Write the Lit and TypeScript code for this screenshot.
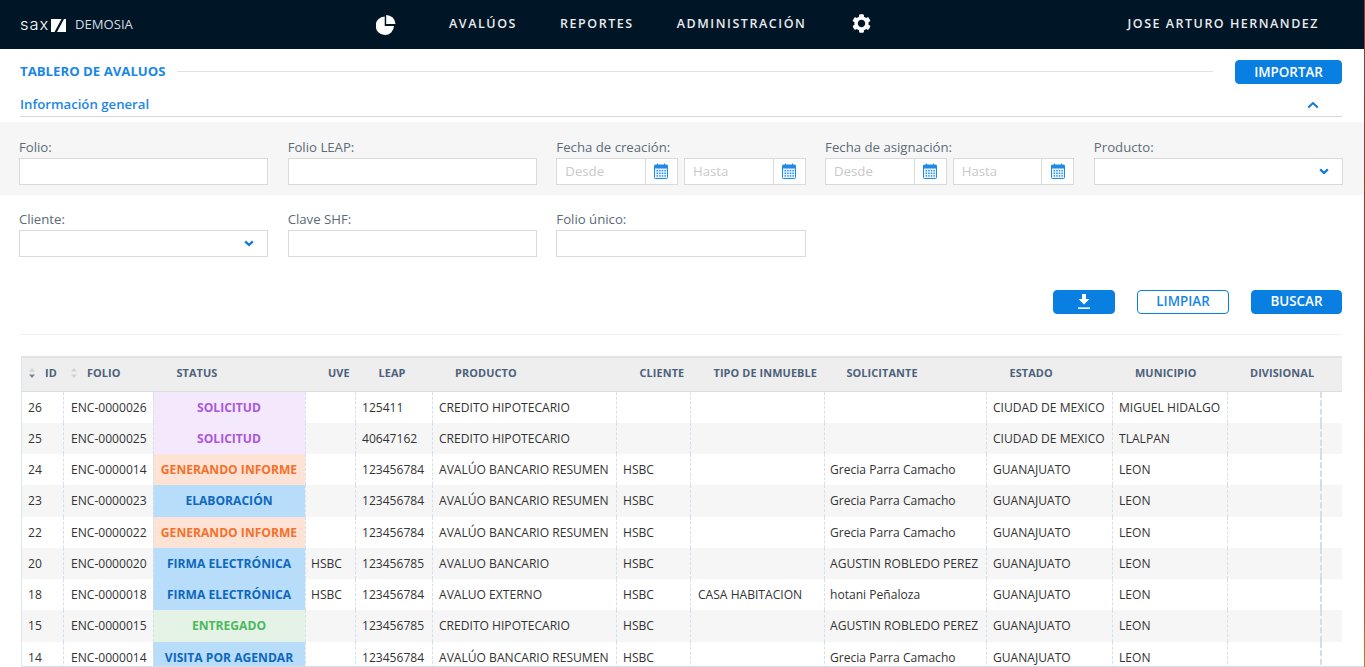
import { LitElement, html, css, svg } from "lit";
import { customElement } from "lit/decorators.js";

type Tone = "sol" | "gen" | "ela" | "ent";
interface Row { id: string; folio: string; status: string; tone: Tone; uve: string; leap: string; prod: string; cli: string; tipo: string; sol: string; edo: string; mun: string; }

const G = "Grecia Parra Camacho";
const A = "AGUSTIN ROBLEDO PEREZ";
const R = "AVALÚO BANCARIO RESUMEN";
const rows: Row[] = [
  { id: "26", folio: "ENC-0000026", status: "SOLICITUD", tone: "sol", uve: "", leap: "125411", prod: "CREDITO HIPOTECARIO", cli: "", tipo: "", sol: "", edo: "CIUDAD DE MEXICO", mun: "MIGUEL HIDALGO" },
  { id: "25", folio: "ENC-0000025", status: "SOLICITUD", tone: "sol", uve: "", leap: "40647162", prod: "CREDITO HIPOTECARIO", cli: "", tipo: "", sol: "", edo: "CIUDAD DE MEXICO", mun: "TLALPAN" },
  { id: "24", folio: "ENC-0000014", status: "GENERANDO INFORME", tone: "gen", uve: "", leap: "123456784", prod: R, cli: "HSBC", tipo: "", sol: G, edo: "GUANAJUATO", mun: "LEON" },
  { id: "23", folio: "ENC-0000023", status: "ELABORACIÓN", tone: "ela", uve: "", leap: "123456784", prod: R, cli: "HSBC", tipo: "", sol: G, edo: "GUANAJUATO", mun: "LEON" },
  { id: "22", folio: "ENC-0000022", status: "GENERANDO INFORME", tone: "gen", uve: "", leap: "123456784", prod: R, cli: "HSBC", tipo: "", sol: G, edo: "GUANAJUATO", mun: "LEON" },
  { id: "20", folio: "ENC-0000020", status: "FIRMA ELECTRÓNICA", tone: "ela", uve: "HSBC", leap: "123456785", prod: "AVALUO BANCARIO", cli: "HSBC", tipo: "", sol: A, edo: "GUANAJUATO", mun: "LEON" },
  { id: "18", folio: "ENC-0000018", status: "FIRMA ELECTRÓNICA", tone: "ela", uve: "HSBC", leap: "123456784", prod: "AVALUO EXTERNO", cli: "HSBC", tipo: "CASA HABITACION", sol: "hotani Peñaloza", edo: "GUANAJUATO", mun: "LEON" },
  { id: "15", folio: "ENC-0000015", status: "ENTREGADO", tone: "ent", uve: "", leap: "123456785", prod: "CREDITO HIPOTECARIO", cli: "HSBC", tipo: "", sol: A, edo: "GUANAJUATO", mun: "LEON" },
  { id: "14", folio: "ENC-0000014", status: "VISITA POR AGENDAR", tone: "ela", uve: "", leap: "123456784", prod: R, cli: "HSBC", tipo: "", sol: G, edo: "GUANAJUATO", mun: "LEON" },
];

const calendar = html`<svg class="cal" viewBox="0 0 14 16" width="14" height="16" aria-hidden="true">
  <path d="M3.5 0.5v3M10.5 0.5v3" stroke="#1e8ae6" stroke-width="1" fill="none"/>
  <rect x="0.5" y="2" width="13" height="13.5" rx="1" fill="#e8f3fd" stroke="#1e8ae6"/>
  <rect x="0.5" y="2" width="13" height="3.5" fill="#1e8ae6"/>
  ${[7, 9.6, 12.2].map((y) => [2.6, 5.2, 7.8, 10.4].map((x) => svg`<rect x="${x}" y="${y}" width="1.4" height="1.4" fill="#1e8ae6"/>`))}
</svg>`;

const chevronDown = html`<svg class="chev" viewBox="0 0 10 7" width="10" height="7" aria-hidden="true"><path d="M1.2 1.4 5 5 8.8 1.4" fill="none" stroke="#1278d8" stroke-width="2.3"/></svg>`;

const sortIcon = (active: boolean) => html`<svg class="sort" viewBox="0 0 8 12" width="8" height="12" aria-hidden="true">
  <path d="M4 1 7 4.6H1Z" fill="#d0d3d6"/><path d="M4 11 1 7.4H7Z" fill="${active ? "#77828d" : "#d0d3d6"}"/>
</svg>`;

@customElement("app-root")
export class AppRoot extends LitElement {
  static styles = css`
    :host { display: block; position: relative; width: 1365px; height: 667px; overflow: hidden; background: #fff; font-family: "Open Sans", "Liberation Sans", sans-serif; color: #333; }
    * { box-sizing: border-box; }
    .edge { position: absolute; top: 0; right: 0; bottom: 0; width: 1px; background: linear-gradient(#8e3c36, #b8431f 85%, #c77a2a); }
    .foot { position: absolute; left: 21px; right: 1px; bottom: 0; height: 1px; background: #d5e0ea; }

    header { height: 49px; background: #001526; color: #fff; display: flex; align-items: center; padding-left: 20px; }
    .brand { flex: 0 0 356px; display: flex; align-items: center; }
    .sax { font-size: 16.5px; line-height: 1; font-weight: 300; letter-spacing: 0.9px; width: 31px; font-family: "Inter", "Open Sans", sans-serif; margin-bottom: 1px; }
    .mark { display: block; margin-right: 10px; margin-bottom: -1px; }
    .demo { font-size: 13.1px; color: #d8dde2; margin-bottom: 2px; margin-left: -1px; }
    .pie { display: block; margin-right: 53px; margin-top: 1px; }
    .nav { font-size: 12.5px; font-weight: 600; letter-spacing: 1.55px; color: #e8ecef; margin-right: 43px; margin-bottom: 2px; white-space: nowrap; }
    .gear { display: block; margin-left: 3px; margin-bottom: 2px; }
    .user { margin-left: auto; margin-right: 46px; margin-bottom: 2px; font-size: 12.5px; font-weight: 600; letter-spacing: 1.5px; color: #e8ecef; }

    .title { height: 35px; margin: 11px 23px 0 20px; display: flex; align-items: flex-start; }
    .title h1 { margin: 0; font-size: 13.2px; line-height: 22px; font-weight: 700; color: #1a87e6; white-space: nowrap; }
    .title .rule { flex: 1; height: 1px; margin: 11px 22px 0 11px; background: #e2e2e2; }
    .btn { font-family: inherit; font-size: 13.4px; font-weight: 600; height: 24px; padding: 0 0 1px; border-radius: 4px; border: 1px solid #0a7fe2; background: #0a7fe2; color: #fff; display: inline-flex; align-items: center; justify-content: center; }
    .btn.imp { width: 107px; }
    .btn.out { background: #fff; color: #1a87e6; width: 92px; }
    .btn.dl { width: 62px; }
    .btn.go { width: 91px; }

    .section { margin: 0 23px 0 20px; height: 22px; border-bottom: 1px solid #d8d8d8; display: flex; justify-content: space-between; align-items: flex-start; font-size: 13.2px; font-weight: 600; color: #1a87e6; line-height: 18px; }
    .section svg { margin: 6px 23px 0 0; display: block; }

    .form { display: grid; grid-template-columns: repeat(5, 1fr); column-gap: 19.6px; padding: 0 22px 0 18.9px; }
    .f1 { margin-top: 5px; height: 73px; padding-top: 16px; background: #f6f6f6; }
    .f2 { padding-top: 15px; }
    .field { min-width: 0; }
    label { display: block; font-size: 13.2px; line-height: 18px; color: #5b6b79; margin-bottom: 2px; }
    .box { display: block; width: 100%; height: 26.5px; border: 1px solid #dadada; background: #fff; font-family: inherit; font-size: 13px; padding: 0 8px; margin: 0; outline: none; color: #333; }
    .sel { display: flex; align-items: center; justify-content: flex-end; padding-right: 13px; }
    .dates { display: grid; grid-template-columns: 1fr 1fr; column-gap: 6px; }
    .date { display: flex; height: 26.5px; border: 1px solid #dadada; background: #fff; min-width: 0; }
    .date input { flex: 1; min-width: 0; width: 0; border: 0; outline: 0; padding: 0 8px; font-family: inherit; font-size: 13.2px; background: transparent; }
    .date input::placeholder { color: #c9c9c9; opacity: 1; }
    .addon { flex: 0 0 32px; border-left: 1px solid #dadada; display: flex; align-items: center; justify-content: center; }
    .cal { display: block; }

    .actions { margin: 33px 23px 0 20px; display: flex; justify-content: flex-end; gap: 22px; height: 24px; }
    .sep { margin: 20px 23px 0 20px; height: 1px; background: #efefef; }

    .table { margin: 21px 23px 0 21px; border-left: 1px solid #dde5ec; }
    .tr { display: grid; grid-template-columns: 41px 90px 152px 50px 77px 184px 74px 134px 162px 126px 115px 93px 1fr; }
    .thead { height: 36px; background: #eeeeee; border-top: 2px solid #e3e3e3; border-bottom: 1px solid #dedede; font-size: 10.9px; font-weight: 700; color: #4c617a; }
    .th { display: flex; align-items: center; padding: 0 0 3px 23.5px; white-space: nowrap; letter-spacing: 0.1px; }
    .th.s { padding-left: 6px; }
    .th.f { padding-left: 7px; }
    .th.a { padding-left: 23px; }
    .th.b { padding-left: 22.5px; }
    .sort { display: block; margin-right: 9px; flex: none; }
    .row { height: 31.25px; font-size: 12.08px; color: #333; }
    .row:nth-child(even) { background: #f6f6f6; }
    .td { display: flex; align-items: center; padding: 0 0 0.2px 6px; white-space: nowrap; overflow: hidden; border-left: 1px dashed #d6e0e9; }
    .td.first { border-left: 0; }
    .td.p7 { padding-left: 7px; }
    .td.p5 { padding-left: 5px; }
    .td.last { border-left: 2px dashed #d3dee8; }
    .td.st { justify-content: center; padding: 0 1px 0.2px 0; font-weight: 700; font-size: 12.1px; }
    .sol { background: #f4e8fc; color: #aa56e0; }
    .gen { background: #fde3d6; color: #f5702a; }
    .ela { background: #b8ddfb; color: #0d68bd; }
    .ent { background: #e4f3e6; color: #4cb860; }
  `;

  private date() {
    return html`<div class="dates">
      <div class="date"><input placeholder="Desde" aria-label="Desde" /><span class="addon">${calendar}</span></div>
      <div class="date"><input placeholder="Hasta" aria-label="Hasta" /><span class="addon">${calendar}</span></div>
    </div>`;
  }

  render() {
    const heads: [string, string][] = [["STATUS", ""], ["UVE", "a"], ["LEAP", ""], ["PRODUCTO", "a"], ["CLIENTE", ""], ["TIPO DE INMUEBLE", ""], ["SOLICITANTE", "b"], ["ESTADO", ""], ["MUNICIPIO", "a"], ["DIVISIONAL", "a"]];
    return html`
      <header>
        <div class="brand">
          <span class="sax">sax</span>
          <svg class="mark" viewBox="0 0 15 13" width="15" height="13" aria-hidden="true">
            <path d="M0 0H10.5L3.5 13H0Z M13 0H15V13H6Z" fill="#fff"/>
          </svg>
          <span class="demo">DEMOSIA</span>
        </div>
        <svg class="pie" viewBox="0 0 20 20" width="20" height="20" aria-hidden="true">
          <path d="M8.7 1.6A9.2 9.2 0 1 0 18 11H8.7Z" fill="#fff"/>
          <path d="M10.2 0A9.3 9.3 0 0 1 19.5 8.9H10.2Z" fill="#fff"/>
        </svg>
        <span class="nav">AVALÚOS</span>
        <span class="nav">REPORTES</span>
        <span class="nav">ADMINISTRACIÓN</span>
        <svg class="gear" viewBox="0 0 512 512" width="19" height="19" aria-hidden="true"><path fill="#fff" d="M487.4 315.7l-42.6-24.6c4.3-23.2 4.3-47 0-70.2l42.6-24.6c4.9-2.8 7.1-8.6 5.5-14-11.1-35.6-30-67.8-54.7-94.6-3.8-4.1-10-5.1-14.8-2.3L380.8 110c-17.9-15.4-38.5-27.3-60.8-35.1V25.8c0-5.6-3.9-10.5-9.4-11.7-36.7-8.2-74.3-7.8-109.2 0-5.5 1.2-9.4 6.1-9.4 11.7V75c-22.2 7.9-42.8 19.8-60.8 35.1L88.7 85.5c-4.9-2.8-11-1.9-14.8 2.3-24.7 26.7-43.6 58.9-54.7 94.6-1.7 5.4 .6 11.2 5.5 14L67.3 221c-4.3 23.2-4.3 47 0 70.2l-42.6 24.6c-4.9 2.8-7.1 8.6-5.5 14 11.1 35.6 30 67.8 54.7 94.6 3.8 4.1 10 5.1 14.8 2.3l42.6-24.6c17.9 15.4 38.5 27.3 60.8 35.1v49.2c0 5.6 3.9 10.5 9.4 11.7 36.7 8.2 74.3 7.8 109.2 0 5.5-1.2 9.4-6.1 9.4-11.7v-49.2c22.2-7.9 42.8-19.8 60.8-35.1l42.6 24.6c4.9 2.8 11 1.9 14.8-2.3 24.7-26.7 43.6-58.9 54.7-94.6 1.5-5.5-.7-11.3-5.6-14.1zM256 356c-55 0-100-45-100-100s45-100 100-100 100 45 100 100-45 100-100 100z"/></svg>
        <span class="user">JOSE ARTURO HERNANDEZ</span>
      </header>

      <div class="title">
        <h1>TABLERO DE AVALUOS</h1>
        <div class="rule"></div>
        <button class="btn imp">IMPORTAR</button>
      </div>
      <div class="section">
        <span>Información general</span>
        <svg viewBox="0 0 12 8" width="12" height="8" aria-hidden="true"><path d="M1.2 6.4 6 2 10.8 6.4" fill="none" stroke="#1278d8" stroke-width="2"/></svg>
      </div>

      <div class="form f1">
        <div class="field"><label>Folio:</label><input class="box" aria-label="Folio" /></div>
        <div class="field"><label>Folio LEAP:</label><input class="box" aria-label="Folio LEAP" /></div>
        <div class="field"><label>Fecha de creación:</label>${this.date()}</div>
        <div class="field"><label>Fecha de asignación:</label>${this.date()}</div>
        <div class="field"><label>Producto:</label><div class="box sel">${chevronDown}</div></div>
      </div>
      <div class="form f2">
        <div class="field"><label>Cliente:</label><div class="box sel">${chevronDown}</div></div>
        <div class="field"><label>Clave SHF:</label><input class="box" aria-label="Clave SHF" /></div>
        <div class="field"><label>Folio único:</label><input class="box" aria-label="Folio único" /></div>
      </div>

      <div class="actions">
        <button class="btn dl" aria-label="Descargar">
          <svg viewBox="0 0 12 15" width="12" height="15" aria-hidden="true"><path d="M4 0H8V5H11.5L6 10.5 .5 5H4Z" fill="#fff"/><rect x="0" y="13.4" width="12" height="1.6" fill="#fff"/></svg>
        </button>
        <button class="btn out">LIMPIAR</button>
        <button class="btn go">BUSCAR</button>
      </div>
      <div class="sep"></div>

      <div class="table">
        <div class="tr thead">
          <div class="th s">${sortIcon(true)}<span>ID</span></div>
          <div class="th f">${sortIcon(false)}<span>FOLIO</span></div>
          ${heads.map(([h, c]) => html`<div class="th ${c}">${h}</div>`)}
          <div class="th"></div>
        </div>
        <div class="tbody">
          ${rows.map((r) => html`<div class="tr row">
            <div class="td first">${r.id}</div>
            <div class="td p7">${r.folio}</div>
            <div class="td st ${r.tone}">${r.status}</div>
            <div class="td p5">${r.uve}</div>
            <div class="td">${r.leap}</div>
            <div class="td">${r.prod}</div>
            <div class="td">${r.cli}</div>
            <div class="td p7">${r.tipo}</div>
            <div class="td p5">${r.sol}</div>
            <div class="td">${r.edo}</div>
            <div class="td">${r.mun}</div>
            <div class="td"></div>
            <div class="td last"></div>
          </div>`)}
        </div>
      </div>
      <div class="foot"></div>
      <div class="edge"></div>
    `;
  }
}
